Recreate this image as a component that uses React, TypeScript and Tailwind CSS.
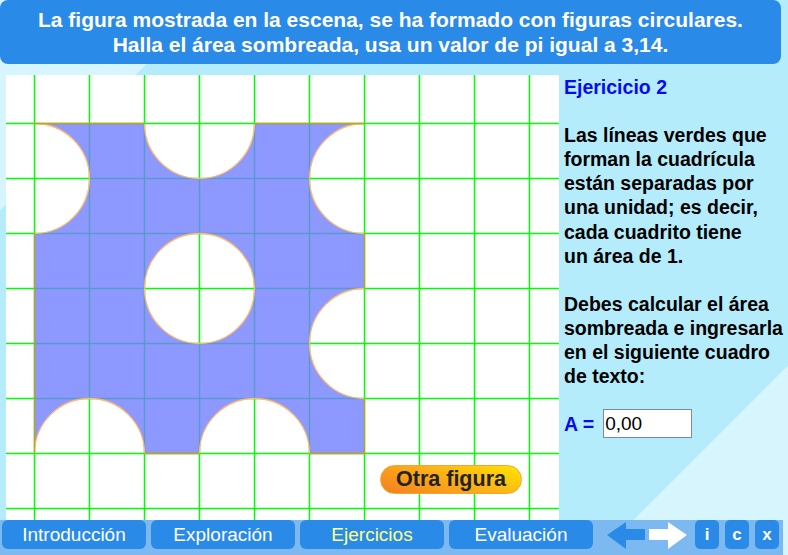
import * as React from "react"

const GRID_X = [34, 89, 144, 199, 254, 309, 364, 419, 474, 529]
const GRID_Y = [123, 178, 233, 288, 343, 398, 453, 508]

const SHAPE =
  "M34 123 L144 123 A55 55 0 0 0 254 123 L364 123 A55 55 0 0 0 364 233 L364 288 A55 55 0 0 0 364 398 L364 453 L309 453 A55 55 0 0 0 199 453 L144 453 A55 55 0 0 0 34 453 L34 233 A55 55 0 0 0 34 123 Z " +
  "M144 288 A55 55 0 1 0 254 288 A55 55 0 1 0 144 288 Z"

const ARCS =
  "M144 123 A55 55 0 0 0 254 123 M364 123 A55 55 0 0 0 364 233 M364 288 A55 55 0 0 0 364 398 M309 453 A55 55 0 0 0 199 453 M144 453 A55 55 0 0 0 34 453 M34 233 A55 55 0 0 0 34 123 M144 288 A55 55 0 1 0 254 288 A55 55 0 1 0 144 288"

const EDGES =
  "M34 123 L144 123 M254 123 L364 123 M364 233 L364 288 M364 398 L364 453 L309 453 M199 453 L144 453 M34 453 L34 233"

const Figure: React.FC = () => (
  <svg width={553} height={445} viewBox="6 75 553 445" className="block">
    {GRID_X.map((x) => (
      <line key={"x" + x} x1={x + 0.5} y1={75} x2={x + 0.5} y2={520} stroke="#00ff00" strokeWidth={1.5} />
    ))}
    {GRID_Y.map((y) => (
      <line key={"y" + y} x1={6} y1={y + 0.5} x2={559} y2={y + 0.5} stroke="#00ff00" strokeWidth={1.5} />
    ))}
    <path d={SHAPE} fill="rgb(112,128,255)" fillOpacity={0.8} fillRule="evenodd" transform="translate(0.5 0.5)" />
    <path d={ARCS} fill="none" stroke="#ffb870" strokeWidth={1.3} transform="translate(0.5 0.5)" />
    <path d={EDGES} fill="none" stroke="#c8a020" strokeWidth={1.3} transform="translate(0.5 0.5)" />
  </svg>
)

const NavButton: React.FC<{ label: string; active?: boolean }> = ({ label, active }) => (
  <button
    className={
      "w-[144px] h-[29px] rounded-[6px] bg-[#2a8ae8] text-[19px] leading-[29px] text-center " +
      (active ? "text-[#ffff88]" : "text-white")
    }
  >
    {label}
  </button>
)

const SmallButton: React.FC<{ label: string }> = ({ label }) => (
  <button className="w-[24px] h-[29px] rounded-[5px] bg-[#2a8ae8] text-white font-bold text-[17px] leading-[29px] text-center">
    {label}
  </button>
)

export default function App() {
  return (
    <div
      className="w-[788px] h-[555px] overflow-hidden flex flex-col bg-[linear-gradient(135deg,#d6f5fd_15.7%,#b4ecfb_15.7%,#b4ecfb_85.9%,#d6f5fd_85.9%)]"
      style={{ fontFamily: '"Liberation Sans", Arial, sans-serif' }}
    >
      {/* enunciado */}
      <div className="w-[781px] h-[64px] shrink-0 rounded-[8px] bg-[#2a8ae8] text-white font-bold text-[21px] leading-[25px] text-center pt-[7px]">
        La figura mostrada en la escena, se ha formado con figuras circulares.
        <br />
        Halla el área sombreada, usa un valor de pi igual a 3,14.
      </div>

      <div className="flex mt-[11px] h-[445px] shrink-0">
        <div className="relative ml-[6px] w-[553px] h-[445px] bg-white">
          <Figure />
          <button className="absolute left-[374px] top-[390px] w-[142px] h-[29px] rounded-full border border-[#f3a33a] bg-[linear-gradient(200deg,#ffe500_0%,#fcb316_45%,#f47e20_100%)] text-[#222] font-bold text-[21.5px] leading-[27px] text-center">
            Otra figura
          </button>
        </div>

        <div className="pl-[5px] flex-1 font-bold text-[19.5px] leading-[24.1px] text-black whitespace-nowrap">
          <div className="text-[#0a0aee]">Ejericicio 2</div>
          <div className="h-[24.1px]" />
          <div>Las líneas verdes que</div>
          <div>forman la cuadrícula</div>
          <div>están separadas por</div>
          <div>una unidad; es decir,</div>
          <div>cada cuadrito tiene</div>
          <div>un área de 1.</div>
          <div className="h-[24.1px]" />
          <div>Debes calcular el área</div>
          <div>sombreada e ingresarla</div>
          <div>en el siguiente cuadro</div>
          <div>de texto:</div>
          <div className="flex items-center gap-[9px] mt-[21px]">
            <span className="text-[#0a0aee]">A =</span>
            <div className="w-[89px] h-[29px] bg-white border border-[#7d8b99] font-normal text-[19px] leading-[27px] pl-[1px]">
              0,00
            </div>
          </div>
        </div>
      </div>

      {/* barra de navegación */}
      <div className="w-[783px] h-[35px] shrink-0 bg-[#7cb9f0] flex items-start pl-[2px] gap-[5px]">
        <NavButton label="Introducción" />
        <NavButton label="Exploración" />
        <NavButton label="Ejercicios" active />
        <NavButton label="Evaluación" />
        <div className="flex items-start gap-[4px] ml-[9px] mt-[1px]">
          <svg width={38} height={28} viewBox="0 0 38 28">
            <path d="M0 14 L19 1 L19 8 L38 8 L38 19 L19 19 L19 28 Z" fill="#2a8ae8" />
          </svg>
          <svg width={38} height={28} viewBox="0 0 38 28">
            <path d="M38 14 L19 1 L19 8 L0 8 L0 19 L19 19 L19 28 Z" fill="#ffffff" />
          </svg>
        </div>
        <div className="flex gap-[6px] ml-[3px]">
          <SmallButton label="i" />
          <SmallButton label="c" />
          <SmallButton label="x" />
        </div>
      </div>
    </div>
  )
}
